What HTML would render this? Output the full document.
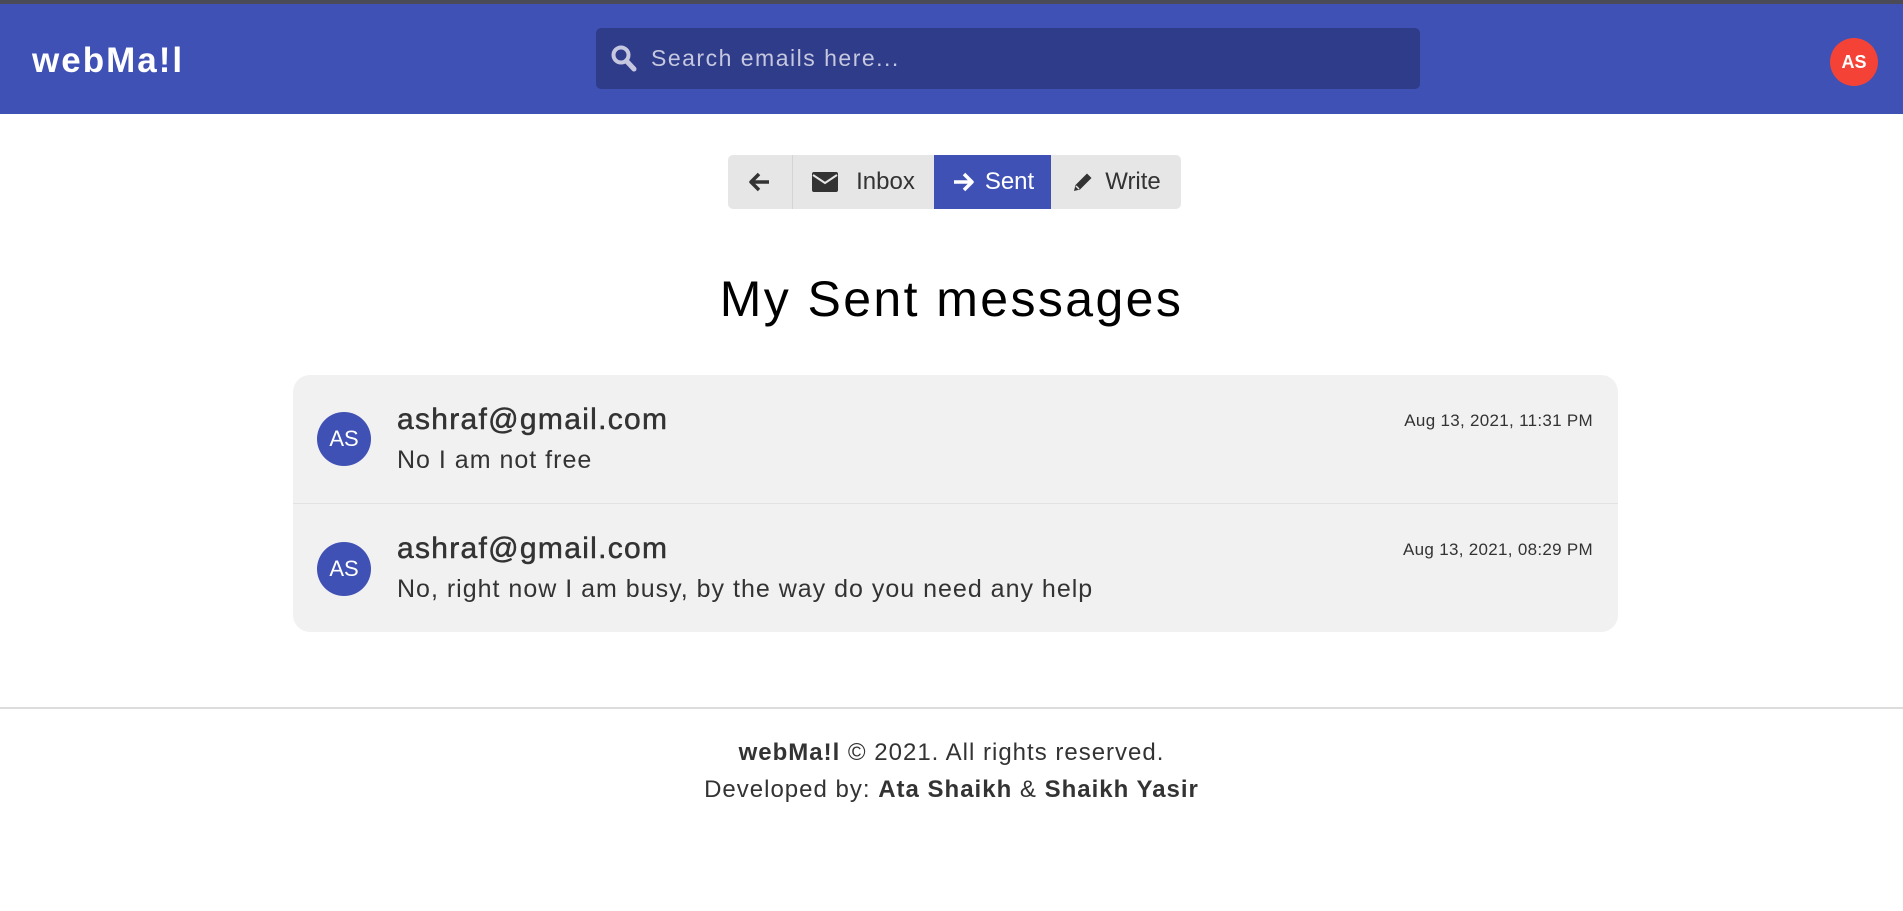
<!DOCTYPE html>
<html><head><meta charset="utf-8"><style>
*{margin:0;padding:0;box-sizing:border-box}
body{width:1903px;height:911px;overflow:hidden;background:#fff;font-family:"Liberation Sans",sans-serif;color:#333;position:relative}
.top{position:absolute;left:0;top:0;width:1903px;height:4px;background:#4a4b57}
.hdr{position:absolute;left:0;top:4px;width:1903px;height:110px;background:#3f51b5}
.logo{position:absolute;left:32px;top:37px;font-size:35px;font-weight:bold;color:#fff;letter-spacing:2px}
.search{position:absolute;left:596px;top:24px;width:824px;height:61px;background:#2f3c8a;border-radius:5px}
.search span{position:absolute;left:55px;top:17px;font-size:23px;color:#c5c8de;letter-spacing:1.5px}
.search svg{position:absolute;left:15px;top:17px}
.av{position:absolute;left:1830px;top:34px;width:48px;height:48px;border-radius:50%;background:#f44336;color:#fff;font-weight:bold;font-size:18px;text-align:center;line-height:48px}
.nav{position:absolute;left:728px;top:155px;height:54px;width:453px;background:#e6e6e6;border-radius:5px;overflow:hidden;display:flex}
.nav div{height:54px;display:flex;align-items:center;justify-content:center;font-size:24px;color:#333;gap:10px}
.nav .s{background:#3f51b5;color:#fff}
h1{position:absolute;left:0;width:1903px;top:270px;text-align:center;font-size:50px;font-weight:normal;letter-spacing:2.4px;color:#000}
.card{position:absolute;left:293px;top:375px;width:1325px;height:257px;background:#f1f1f1;border-radius:17px}
.row{position:absolute;left:0;width:1325px;height:128px}
.row+.row{border-top:1px solid #e2e2e2}
.ca{position:absolute;left:24px;width:54px;height:54px;border-radius:50%;background:#3f51b5;color:#fff;font-size:22px;text-align:center;line-height:54px}
.em{position:absolute;left:104px;top:28px;font-size:30px;letter-spacing:1.3px;color:#333;-webkit-text-stroke:0.5px #333}
.msg{position:absolute;left:104px;top:71px;font-size:25px;letter-spacing:1px;color:#333}
.dt{position:absolute;right:25px;top:36px;font-size:17px;color:#333;letter-spacing:0.3px}
.hr{position:absolute;left:0;top:707px;width:1903px;height:2px;background:#dcdcdc}
.ft{position:absolute;left:0;width:1903px;text-align:center;font-size:24px;color:#333;letter-spacing:1px}
</style></head><body>
<div class="top"></div>
<div class="hdr">
<div class="logo">webMa!l</div>
<div class="search"><svg width="26" height="28" viewBox="0 0 26 28"><circle cx="10" cy="10" r="7.5" fill="none" stroke="#c5c8de" stroke-width="4"/><path d="M15.5 16 L23 24" stroke="#c5c8de" stroke-width="5" stroke-linecap="round"/></svg><span>Search emails here...</span></div>
<div class="av">AS</div>
</div>
<div class="nav">
<div style="width:65px;border-right:1px solid #d4d4d4"><svg width="24" height="22" viewBox="0 0 24 22"><path d="M21 11H4M11 3L3 11L11 19" fill="none" stroke="#333" stroke-width="3.5" stroke-linejoin="round"/></svg></div>
<div style="width:141px"><svg width="26" height="20" viewBox="0 0 26 20"><rect x="0" y="0" width="26" height="20" rx="2" fill="#333"/><path d="M1 3L13 11L25 3" fill="none" stroke="#e6e6e6" stroke-width="2"/></svg><span style="margin-left:8px">Inbox</span></div>
<div class="s" style="width:117px"><svg width="24" height="22" viewBox="0 0 24 22"><path d="M3 11H20M13 3L21 11L13 19" fill="none" stroke="#fff" stroke-width="3.5" stroke-linejoin="round"/></svg><span>Sent</span></div>
<div style="width:130px"><svg width="24" height="24" viewBox="0 0 24 24"><path d="M3 21L4.5 15L16 3.5L20.5 8L9 19.5Z" fill="#333"/><path d="M5 16L8 19" stroke="#e6e6e6" stroke-width="1.5"/></svg><span>Write</span></div>
</div>
<h1>My Sent messages</h1>
<div class="card">
<div class="row" style="top:0"><div class="ca" style="top:37px">AS</div><div class="em">ashraf@gmail.com</div><div class="msg">No I am not free</div><div class="dt">Aug 13, 2021, 11:31 PM</div></div>
<div class="row" style="top:128px;height:129px"><div class="ca" style="top:38px">AS</div><div class="em">ashraf@gmail.com</div><div class="msg">No, right now I am busy, by the way do you need any help</div><div class="dt">Aug 13, 2021, 08:29 PM</div></div>
</div>
<div class="hr"></div>
<div class="ft" style="top:739px"><b>webMa!l</b> © 2021. All rights reserved.</div>
<div class="ft" style="top:776px">Developed by: <b>Ata Shaikh</b> &amp; <b>Shaikh Yasir</b></div>
</body></html>
